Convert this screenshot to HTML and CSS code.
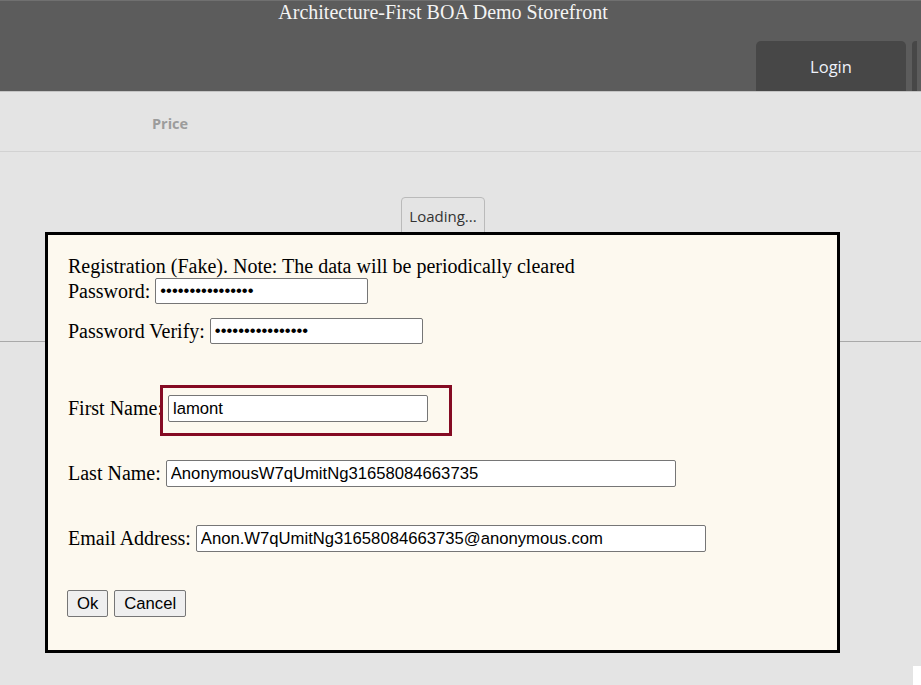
FILE: index.html
```html
<!DOCTYPE html>
<html>
<head>
<meta charset="utf-8">
<link rel="stylesheet" href="styles.css">
</head>
<body>
<header class="topbar">
  <div class="title">Architecture-First BOA Demo Storefront</div>
  <nav class="nav">
    <button class="nav-btn">Login</button>
    <span class="nav-stub"></span>
  </nav>
</header>
<div class="cols">
  <span class="col-price">Price</span>
</div>
<section class="content">
  <button class="loading">Loading...</button>
</section>

<div class="modal">
  <div class="note">Registration (Fake). Note: The data will be periodically cleared</div>
  <div class="row r-pass">
    <span class="lbl">Password:</span>
    <input class="field f-short" type="password" value="abcdefghijklmnop">
  </div>
  <div class="row r-verify">
    <span class="lbl">Password Verify:</span>
    <input class="field f-short" type="password" value="abcdefghijklmnop">
  </div>
  <div class="row r-first">
    <span class="lbl">First Name:</span>
    <div class="focus-box">
      <input class="field f-mid" type="text" value="lamont">
    </div>
  </div>
  <div class="row r-last">
    <span class="lbl">Last Name:</span>
    <input class="field f-long" type="text" value="AnonymousW7qUmitNg31658084663735">
  </div>
  <div class="row r-email">
    <span class="lbl">Email Address:</span>
    <input class="field f-long" type="text" value="Anon.W7qUmitNg31658084663735@anonymous.com">
  </div>
  <div class="row r-btns">
    <button class="btn">Ok</button>
    <button class="btn">Cancel</button>
  </div>
</div>
<div class="corner"></div>
</body>
</html>
```

FILE: styles.css
```css
html, body {
  margin: 0;
  padding: 0;
}
body {
  background: #e4e4e4;
  width: 921px;
  height: 685px;
  overflow: hidden;
  position: relative;
  font-family: "Liberation Serif", "Times New Roman", serif;
}

.topbar {
  background: #5c5c5c;
  border-top: 1px solid #707070;
  border-bottom: 1px solid #c4c4c4;
  height: 90px;
  box-sizing: content-box;
}
.title {
  width: 886px;
  text-align: center;
  color: #f4f4f4;
  font-size: 20px;
  line-height: 22px;
}
.nav {
  display: flex;
  justify-content: flex-end;
  align-items: flex-end;
  gap: 6px;
  padding-right: 4px;
  margin-top: 18px;
}
.nav-btn {
  width: 150px;
  height: 50px;
  background: #474747;
  border: none;
  border-radius: 5px 5px 0 0;
  color: #eef2fb;
  font-family: "Open Sans", sans-serif;
  font-size: 16.5px;
  padding: 1px 0 0 0;
}
.nav-stub {
  width: 5px;
  height: 50px;
  background: #474747;
  border-radius: 4px 0 0 0;
}

.cols {
  height: 60px;
  border-bottom: 1px solid #d2d2d2;
  display: flex;
  align-items: center;
  padding-left: 152px;
  padding-top: 4px;
  box-sizing: border-box;
}
.col-price {
  font-family: "Open Sans", sans-serif;
  font-weight: 700;
  font-size: 14.5px;
  color: #9c9c9c;
}

.content {
  height: 190px;
  border-bottom: 1px solid #a9a9a9;
  display: flex;
  justify-content: center;
  align-items: flex-start;
  padding: 45px 35px 0 0;
  box-sizing: border-box;
}
.loading {
  height: 42px;
  padding: 0 7px 4px;
  background: #e4e4e4;
  border: 1px solid #bababa;
  border-radius: 4px;
  font-family: "Open Sans", sans-serif;
  font-size: 15px;
  color: #333;
}

.modal {
  position: absolute;
  left: 45px;
  top: 232px;
  width: 795px;
  height: 421px;
  box-sizing: border-box;
  border: 3px solid #000;
  background: #fdf9ef;
  padding: 20px 20px 0 20px;
  color: #000;
  font-size: 20px;
}
.note {
  line-height: 23px;
  white-space: nowrap;
}
.row {
  display: flex;
  align-items: center;
  gap: 5px;
  white-space: nowrap;
}
.lbl {
  line-height: 23px;
}
.r-pass { margin-top: 0; }
.r-verify { margin-top: 14px; }
.r-first { margin-top: 41px; }
.r-first .lbl { margin-top: -4px; }
.r-last { margin-top: 24px; }
.r-email { margin-top: 38px; }
.r-btns { margin-top: 38px; gap: 6px; margin-left: -1px; }

.field {
  box-sizing: border-box;
  height: 27px;
  border: 1px solid #767676;
  border-radius: 2px;
  background: #fff;
  padding: 0 4px;
  margin: 0;
  font-family: "Liberation Sans", Arial, sans-serif;
  font-size: 16.67px;
  color: #000;
  outline: none;
}
.r-pass .field, .r-verify .field { height: 26px; }
.f-short { width: 213px; }
.f-mid { width: 260px; }
.f-long { width: 510px; }

.focus-box {
  margin-left: -8px;
  border: 3px solid #850b23;
  padding: 7px 21px 11px 5px;
  display: flex;
}

.btn {
  height: 27px;
  box-sizing: border-box;
  border: 1px solid #767676;
  border-radius: 2px;
  background: #efefef;
  padding: 0 9px;
  font-family: "Liberation Sans", Arial, sans-serif;
  font-size: 16.67px;
  color: #000;
}

.corner {
  position: absolute;
  right: 0;
  bottom: 0;
  width: 8px;
  height: 19px;
  background: #fff;
}
```
